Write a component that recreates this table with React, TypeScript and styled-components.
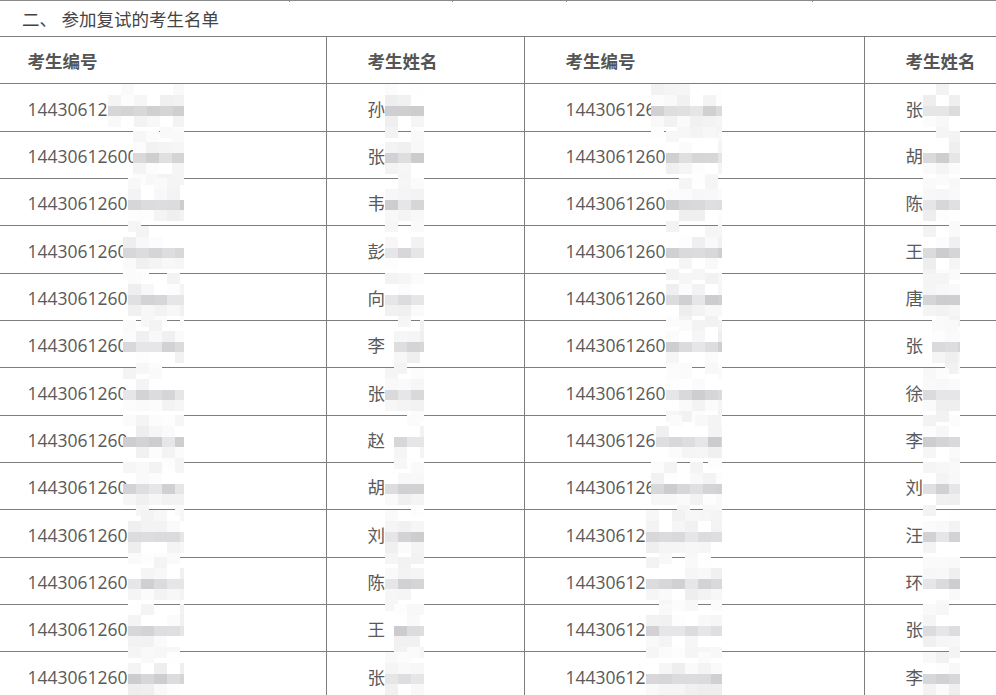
import styled, { createGlobalStyle } from 'styled-components'

const GlobalStyle = createGlobalStyle`
  html, body {
    margin: 0;
    background: #fff;
  }
  body {
    font-family: "Open Sans", "Noto Sans CJK SC", sans-serif;
    color: #555;
  }
`

// [编号, 姓名, 编号, 姓名]; "~" = last digit half hidden by the mosaic
const rows: string[][] = [
  ['14430612', '孙', '144306126~', '张'],
  ['14430612600~', '张', '1443061260', '胡'],
  ['1443061260', '韦', '1443061260', '陈'],
  ['1443061260~', '彭', '1443061260', '王'],
  ['1443061260', '向', '1443061260', '唐'],
  ['1443061260~', '李\u2002', '1443061260', '张\u2002'],
  ['1443061260~', '张', '1443061260', '徐'],
  ['1443061260~', '赵\u2002', '144306126', '李'],
  ['1443061260~', '胡', '144306126~', '刘'],
  ['1443061260', '刘', '14430612', '汪'],
  ['1443061260', '陈', '14430612', '环'],
  ['1443061260', '王\u2002', '14430612', '张'],
  ['1443061260', '张', '14430612', '李'],
]

const colWidths = [340, 198, 340, 198]
const contentWidths = [152, 52, 152, 50]

const hash = (n: number) => {
  const x = Math.sin(n * 12.9898 + 78.233) * 43758.5453
  return x - Math.floor(x)
}

const blockColor = (seed: number, row: number) => {
  const h = hash(seed)
  const g = hash(seed + 0.5)
  if (row === 2) {
    const v = h > 0.8 ? 230 : 204 + Math.floor(h * 26)
    return `rgb(${v},${v},${v + 2})`
  }
  if (row === 1 || row === 3) {
    if (h < 0.25) return 'transparent'
    const v = 238 + Math.floor(g * 16)
    return `rgb(${v},${v},${v})`
  }
  if (h < 0.5) return 'transparent'
  const v = 242 + Math.floor(g * 13)
  return `rgb(${v},${v},${v})`
}

function Mosaic({ seed, cut }: { seed: number; cut: boolean }) {
  const blocks = []
  for (let c = 0; c < 8; c++) {
    for (let r = 0; r < 5; r++) {
      blocks.push(<Block key={c * 5 + r} $c={blockColor(seed * 131 + c * 7 + r, r)} />)
    }
  }
  return (
    <Smear $cut={cut}>
      <Blocks>{blocks}</Blocks>
    </Smear>
  )
}

export default function App() {
  return (
    <>
      <GlobalStyle />
      <Page>
        <PrevBottom>
          <Tick $w={290} />
          <Tick $w={163} />
          <Tick $w={114} />
          <Tick $w={246} />
        </PrevBottom>
        <Title>二、 参加复试的考生名单</Title>
        <Table>
          <colgroup>
            {colWidths.map((w, i) => (
              <col key={i} style={{ width: w }} />
            ))}
          </colgroup>
          <thead>
            <Row>
              <Head>考生编号</Head>
              <Head>考生姓名</Head>
              <Head>考生编号</Head>
              <Head>考生姓名</Head>
            </Row>
          </thead>
          <tbody>
            {rows.map((r, ri) => (
              <Row key={ri}>
                {r.map((text, ci) => {
                  const cut = text.endsWith('~')
                  return (
                    <Cell key={ci}>
                      <Content $w={contentWidths[ci]}>
                        <Visible>{cut ? text.slice(0, -1) : text}</Visible>
                        <Mosaic seed={ri * 4 + ci + 1} cut={cut} />
                      </Content>
                    </Cell>
                  )
                })}
              </Row>
            ))}
          </tbody>
        </Table>
      </Page>
    </>
  )
}

const Page = styled.div`
  width: 996px;
  height: 695px;
  overflow: hidden;
`

const PrevBottom = styled.div`
  display: flex;
  height: 1px;
  border-top: 1px solid #8a8a8a;
`

const Tick = styled.div<{ $w: number }>`
  width: ${p => p.$w - 1}px;
  border-right: 1px solid #8a8a8a;
`

const Title = styled.div`
  height: 34px;
  display: flex;
  align-items: center;
  padding-left: 22px;
  padding-bottom: 1px;
  box-sizing: border-box;
  font-size: 17.5px;
  color: #444;
  white-space: pre;
`

const Table = styled.table`
  margin-left: -14px;
  width: 1076px;
  table-layout: fixed;
  border-collapse: collapse;
  font-size: 17.5px;
`

const Row = styled.tr`
  height: 47.333px;
`

const Head = styled.th`
  border: 1px solid #7d7d7d;
  padding: 0 0 0 40.5px;
  text-align: left;
  font-weight: 700;
  color: #555;
`

const Cell = styled.td`
  border: 1px solid #7d7d7d;
  padding: 0 0 0 40.5px;
  color: #5a5a5a;
`

const Content = styled.span<{ $w: number }>`
  display: inline-flex;
  align-items: center;
  width: ${p => p.$w}px;
  vertical-align: middle;
`

const Visible = styled.span`
  white-space: pre;
  line-height: 24px;
`

const Smear = styled.span<{ $cut: boolean }>`
  position: relative;
  flex: 1;
  height: 10px;
  margin-top: 4px;
  margin-left: ${p => (p.$cut ? -5 : 0)}px;
`

const Blocks = styled.span`
  position: absolute;
  top: -22px;
  left: 0;
  right: -4px;
  height: 54px;
  display: grid;
  grid-template-rows: 11px 11px 10px 11px 11px;
  grid-auto-flow: column;
  grid-auto-columns: 13px;
  overflow: hidden;
`

const Block = styled.span<{ $c: string }>`
  background: ${p => p.$c};
`
